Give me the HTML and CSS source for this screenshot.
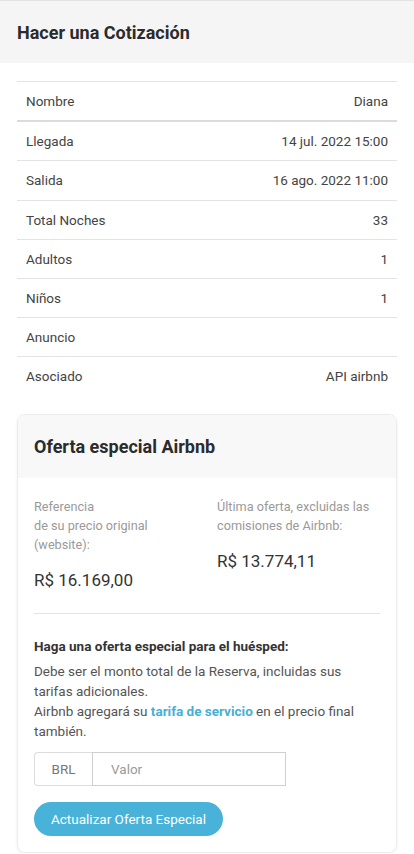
FILE: index.html
```html
<!DOCTYPE html>
<html lang="es">
<head>
<meta charset="utf-8">
<title>Hacer una Cotización</title>
<link rel="stylesheet" href="styles.css">
</head>
<body>
<header class="page-head">
  <h1 class="page-title">Hacer una Cotización</h1>
</header>
<main class="content">
  <table class="info-table">
    <thead>
      <tr><th>Nombre</th><th class="val">Diana</th></tr>
    </thead>
    <tbody>
      <tr><td>Llegada</td><td class="val">14 jul. 2022 15:00</td></tr>
      <tr><td>Salida</td><td class="val">16 ago. 2022 11:00</td></tr>
      <tr><td>Total Noches</td><td class="val">33</td></tr>
      <tr><td>Adultos</td><td class="val">1</td></tr>
      <tr><td>Niños</td><td class="val">1</td></tr>
      <tr><td>Anuncio</td><td class="val"></td></tr>
      <tr><td>Asociado</td><td class="val">API airbnb</td></tr>
    </tbody>
  </table>

  <section class="card">
    <div class="card-head">
      <h2 class="card-title">Oferta especial Airbnb</h2>
    </div>
    <div class="card-body">
      <div class="prices">
        <div class="price-col">
          <p class="price-label">Referencia<br>de su precio original<br>(website):</p>
          <p class="price">R$ 16.169,00</p>
        </div>
        <div class="price-col">
          <p class="price-label">Última oferta, excluidas las comisiones de Airbnb:</p>
          <p class="price">R$ 13.774,11</p>
        </div>
      </div>
      <hr class="divider">
      <p class="offer-title">Haga una oferta especial para el huésped:</p>
      <p class="offer-text">Debe ser el monto total de la Reserva, incluidas sus tarifas adicionales.<br>Airbnb agregará su <a class="link" href="#">tarifa de servicio</a> en el precio final también.</p>
      <div class="input-group">
        <span class="addon">BRL</span>
        <input class="field" type="text" placeholder="Valor">
      </div>
      <button class="btn" type="button">Actualizar Oferta Especial</button>
    </div>
  </section>
</main>
</body>
</html>
```
FILE: styles.css
```css
* { box-sizing: border-box; }
html, body { margin: 0; padding: 0; }
body {
  font-family: Roboto, "Liberation Sans", Arial, sans-serif;
  color: #333;
  background: #fff;
  width: 414px;
}
.page-head {
  background: #f5f5f5;
  border-top: 1px solid #e2e2e2;
  height: 63px;
  display: flex;
  align-items: center;
  padding: 0 17px;
}
.page-title {
  margin: 0;
  font-size: 18px;
  font-weight: 700;
  color: #2b2b2b;
}
.content {
  padding: 18px 17px 0;
}
.info-table {
  width: 100%;
  border-collapse: collapse;
  font-size: 13.5px;
  color: #444;
}
.info-table th,
.info-table td {
  font-weight: 400;
  text-align: left;
  padding: 10px 9px;
  line-height: 18.2px;
  border-top: 1px solid #e3e3e3;
}
.info-table thead th {
  border-bottom: 2px solid #dcdcdc;
}
.info-table tbody tr:first-child td { border-top: 0; }
.info-table .val { text-align: right; }

.card {
  margin-top: 18px;
  border: 1px solid #ececec;
  border-radius: 8px;
  box-shadow: 0 1px 3px rgba(0,0,0,0.07);
  overflow: hidden;
}
.card-head {
  background: #f8f8f8;
  height: 63px;
  display: flex;
  align-items: center;
  padding: 0 16px;
}
.card-title {
  margin: 0;
  font-size: 18px;
  font-weight: 700;
  color: #2b2b2b;
}
.card-body {
  padding: 19px 16px 16px;
}
.prices {
  display: grid;
  grid-template-columns: 1fr 1fr;
  column-gap: 20px;
}
.price-label {
  margin: 0;
  font-size: 12.7px;
  line-height: 19px;
  color: #9a9a9a;
}
.price {
  margin: 14px 0 0;
  font-size: 17px;
  line-height: 24px;
  color: #333;
}
.divider {
  border: 0;
  border-top: 1px solid #e4e4e4;
  margin: 21px 0 22px;
}
.offer-title {
  margin: 0;
  font-size: 13.5px;
  font-weight: 700;
  line-height: 20px;
  color: #333;
}
.offer-text {
  margin: 5px 0 0;
  font-size: 13.5px;
  line-height: 20px;
  color: #555;
}
.link {
  color: #45b0d6;
  font-weight: 700;
  text-decoration: none;
}
.input-group {
  display: flex;
  width: 252px;
  height: 34px;
  margin-top: 11px;
}
.addon {
  width: 58px;
  display: flex;
  align-items: center;
  justify-content: center;
  font-size: 13.5px;
  color: #777;
  border: 1px solid #dcdcdc;
  border-right: 0;
  border-radius: 4px 0 0 4px;
  background: #fff;
}
.field {
  flex: 1;
  min-width: 0;
  border: 1px solid #cfcfcf;
  font-family: inherit;
  font-size: 13.5px;
  padding: 0 18px;
  color: #555;
  outline: none;
}
.field::placeholder { color: #9a9a9a; }
.btn {
  margin-top: 16px;
  display: block;
  height: 34px;
  padding: 0 17px;
  border: 0;
  border-radius: 17px;
  background: #48b2d8;
  color: #fff;
  font-family: inherit;
  font-size: 13.5px;
}
```
